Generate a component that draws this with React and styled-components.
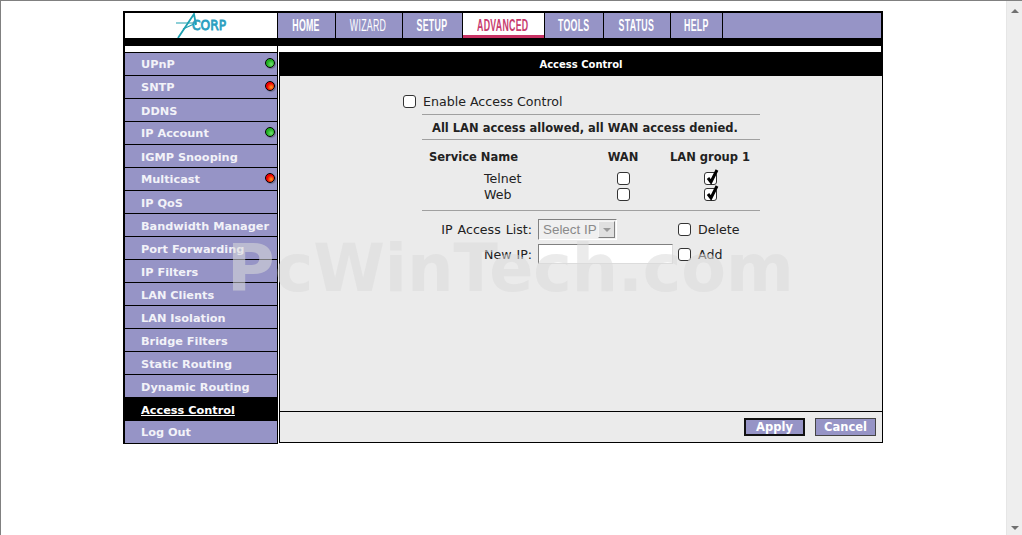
import styled, { createGlobalStyle } from "styled-components"

const NAV = [
    { label: "HOME", width: 57 },
    { label: "WIZARD", width: 66, thin: true },
    { label: "SETUP", width: 59 },
    { label: "ADVANCED", width: 81, active: true },
    { label: "TOOLS", width: 58 },
    { label: "STATUS", width: 66 },
    { label: "HELP", width: 51 },
]

const MENU = [
    { label: "UPnP", dot: "green", raised: true },
    { label: "SNTP", dot: "red", raised: true },
    { label: "DDNS" },
    { label: "IP Account", dot: "green", raised: true },
    { label: "IGMP Snooping" },
    { label: "Multicast", dot: "red", raised: true },
    { label: "IP QoS" },
    { label: "Bandwidth Manager" },
    { label: "Port Forwarding" },
    { label: "IP Filters" },
    { label: "LAN Clients" },
    { label: "LAN Isolation" },
    { label: "Bridge Filters" },
    { label: "Static Routing" },
    { label: "Dynamic Routing" },
    { label: "Access Control", active: true },
    { label: "Log Out", raised: true },
]

function Check({ checked }) {
    return (
        <CheckBox>
            {checked && (
                <CheckMark viewBox="0 0 14 16">
                    <path d="M3 9 L6 13 L12 1" fill="none" stroke="#000" strokeWidth="3" />
                </CheckMark>
            )}
        </CheckBox>
    )
}

export default function App() {
    return (
        <Page>
            <GlobalStyle />
            <Content>
                <Frame>
                    <TopBar>
                        <LogoCell>
                            <svg width="70" height="25" viewBox="0 0 70 25">
                                <path d="M12 25 L28 1 L30 12" fill="none" stroke="#1d9fb0" strokeWidth="1.8" />
                                <path d="M10 10 L31 10 M17 16 L28 11" fill="none" stroke="#1d9fb0" strokeWidth="1.2" />
                                <LogoText x="26" y="17" textLength="34" lengthAdjust="spacingAndGlyphs">CORP</LogoText>
                            </svg>
                        </LogoCell>
                        {NAV.map((item) => (
                            <NavItem key={item.label} $width={item.width} $active={item.active}>
                                <NavLabel $thin={item.thin}>{item.label}</NavLabel>
                            </NavItem>
                        ))}
                        <NavFiller />
                    </TopBar>
                    <Columns>
                        <Sidebar>
                            <SideStrip />
                            {MENU.map((item) => (
                                <MenuRow key={item.label} $active={item.active}>
                                    <MenuLabel $active={item.active} $raised={item.raised}>{item.label}</MenuLabel>
                                    {item.dot && <StatusDot $color={item.dot} />}
                                </MenuRow>
                            ))}
                        </Sidebar>
                        <MainColumn>
                            <MainStrip />
                            <Panel>
                                <PanelTitle>Access Control</PanelTitle>
                                <FormArea>
                                    <EnableRow>
                                        <Check />
                                        <span>Enable Access Control</span>
                                    </EnableRow>
                                    <FormBlock>
                                        <Notice>All LAN access allowed, all WAN access denied.</Notice>
                                        <ServiceGrid>
                                            <HeadCell $first>Service Name</HeadCell>
                                            <HeadCell>WAN</HeadCell>
                                            <HeadCell>LAN group 1</HeadCell>
                                            <ServiceName>Telnet</ServiceName>
                                            <CheckCell><Check /></CheckCell>
                                            <CheckCell><Check checked /></CheckCell>
                                            <ServiceName>Web</ServiceName>
                                            <CheckCell><Check /></CheckCell>
                                            <CheckCell><Check checked /></CheckCell>
                                        </ServiceGrid>
                                        <IpGrid>
                                            <IpLabel>IP Access List:</IpLabel>
                                            <FakeSelect>
                                                Select IP
                                                <SelectArrow />
                                            </FakeSelect>
                                            <OptionLabel>
                                                <Check />
                                                <span>Delete</span>
                                            </OptionLabel>
                                            <IpLabel>New IP:</IpLabel>
                                            <IpInput />
                                            <OptionLabel>
                                                <Check />
                                                <span>Add</span>
                                            </OptionLabel>
                                        </IpGrid>
                                    </FormBlock>
                                </FormArea>
                                <PanelFooter>
                                    <FooterButton $primary>Apply</FooterButton>
                                    <FooterButton>Cancel</FooterButton>
                                </PanelFooter>
                            </Panel>
                        </MainColumn>
                    </Columns>
                    <Watermark>PcWinTech.com</Watermark>
                </Frame>
            </Content>
            <ScrollBar>
                <ScrollArrow $up />
                <ScrollArrow />
            </ScrollBar>
        </Page>
    )
}

const GlobalStyle = createGlobalStyle`
    html, body {
        margin: 0;
        padding: 0;
        background: #ffffff;
        overflow: hidden;
    }
    * {
        box-sizing: border-box;
    }
`

const Page = styled.div`
    display: flex;
    width: 1022px;
    height: 535px;
    border-top: 1px solid #808080;
    font-family: "DejaVu Sans", Verdana, sans-serif;
    background: #ffffff;
`

const Content = styled.div`
    flex: 1;
    border-left: 1px solid #808080;
    padding: 10px 0 0 122px;
`

const Frame = styled.div`
    position: relative;
    width: 760px;
`

const TopBar = styled.div`
    display: flex;
    gap: 1px;
    height: 35px;
    padding: 2px 2px 8px;
    background: #000000;
`

const LogoCell = styled.div`
    display: flex;
    justify-content: center;
    width: 152px;
    background: #ffffff;
`

const LogoText = styled.text`
    font-family: "DejaVu Sans", sans-serif;
    font-size: 13.5px;
    font-weight: 400;
    fill: #2a9fc0;
    stroke: #2a9fc0;
    stroke-width: 0.8px;
`

const NavItem = styled.div`
    display: flex;
    align-items: center;
    justify-content: center;
    width: ${(p) => p.$width}px;
    background: ${(p) => (p.$active ? "#ffffff" : "#9694c6")};
    border-bottom: ${(p) => (p.$active ? "3px solid #c83264" : "none")};
    padding-top: ${(p) => (p.$active ? "3px" : "0")};
    color: ${(p) => (p.$active ? "#c83c6e" : "#ffffff")};
`

const NavLabel = styled.span`
    display: inline-block;
    margin-left: -1px;
    font-family: "Liberation Sans", Arial, sans-serif;
    font-size: 16px;
    font-weight: ${(p) => (p.$thin ? 400 : 700)};
    letter-spacing: 0.5px;
    transform: scaleX(0.55);
`

const NavFiller = styled.div`
    flex: 1;
    background: #9694c6;
`

const Columns = styled.div`
    display: flex;
`

const Sidebar = styled.div`
    width: 155px;
    background: #000000;
    padding: 0 1px 1px 2px;
`

const SideStrip = styled.div`
    height: 6px;
    background: #ffffff;
`

const MenuRow = styled.div`
    display: flex;
    align-items: center;
    justify-content: space-between;
    height: 23px;
    padding: 0 2px 0 16px;
    border-top: 1px solid #000000;
    background: ${(p) => (p.$active ? "#000000" : "#9694c6")};
`

const MenuLabel = styled.span`
    padding-top: ${(p) => (p.$raised ? "0" : "2px")};
    font-size: 11.3px;
    font-weight: 700;
    color: ${(p) => (p.$active ? "#ffffff" : "#f2f2f8")};
    text-decoration: ${(p) => (p.$active ? "underline" : "none")};
    white-space: nowrap;
`

const StatusDot = styled.span`
    width: 10px;
    height: 10px;
    margin-bottom: 3px;
    border-radius: 50%;
    border: 1px solid #000000;
    background: ${(p) =>
        p.$color === "green"
            ? "radial-gradient(circle at 65% 65%, #70e070, #20b020 55%)"
            : "radial-gradient(circle at 65% 65%, #ffa020, #f00000 55%)"};
    box-shadow: 1px 1px 1px #6f6f8f;
`

const MainColumn = styled.div`
    flex: 1;
`

const MainStrip = styled.div`
    height: 6px;
    background: #ffffff;
    border-right: 2px solid #000000;
`

const Panel = styled.div`
    margin-left: 1px;
    height: 391px;
    display: flex;
    flex-direction: column;
    border: 1px solid #000000;
    border-top: none;
    background: #ebebeb;
`

const PanelTitle = styled.div`
    display: flex;
    align-items: center;
    justify-content: center;
    height: 24px;
    flex-shrink: 0;
    background: #000000;
    color: #ffffff;
    font-size: 10px;
    font-weight: 700;
`

const FormArea = styled.div`
    height: 335px;
    flex-shrink: 0;
    padding: 15px 0 0 123px;
    font-size: 12.6px;
    color: #222222;
`

const EnableRow = styled.div`
    display: flex;
    align-items: center;
    gap: 7px;
    height: 20px;
`

const FormBlock = styled.div`
    width: 338px;
    margin: 3px 0 0 19px;
`

const Notice = styled.div`
    height: 26px;
    padding-left: 10px;
    line-height: 26px;
    font-size: 11.5px;
    font-weight: 700;
    white-space: nowrap;
    border-top: 1px solid #a0a0a0;
    border-bottom: 1px solid #a0a0a0;
`

const ServiceGrid = styled.div`
    display: grid;
    grid-template-columns: 171px 60px 114px;
    grid-template-rows: 26px 16px 16px;
    align-items: center;
    height: 71px;
    padding-top: 4px;
    border-bottom: 1px solid #a0a0a0;
`

const HeadCell = styled.div`
    display: flex;
    align-items: center;
    justify-content: ${(p) => (p.$first ? "flex-start" : "center")};
    padding-left: ${(p) => (p.$first ? "7px" : "0")};
    font-size: 11.5px;
    font-weight: 700;
    white-space: nowrap;
`

const ServiceName = styled.div`
    padding-left: 62px;
`

const CheckCell = styled.div`
    display: flex;
    justify-content: center;
`

const CheckBox = styled.span`
    position: relative;
    display: inline-block;
    flex-shrink: 0;
    width: 13px;
    height: 13px;
    border: 1px solid #333333;
    border-radius: 3px;
    background: #ffffff;
`

const CheckMark = styled.svg`
    position: absolute;
    left: 0;
    top: -4px;
    width: 14px;
    height: 16px;
`

const IpGrid = styled.div`
    display: grid;
    grid-template-columns: 110px 135px auto;
    column-gap: 6px;
    row-gap: 4px;
    align-items: center;
    padding-top: 8px;
`

const IpLabel = styled.div`
    text-align: right;
    word-spacing: 1px;
    white-space: nowrap;
`

const FakeSelect = styled.div`
    display: flex;
    align-items: center;
    justify-content: space-between;
    width: 79px;
    height: 21px;
    padding: 0 1px 0 4px;
    border: 1px solid;
    border-color: #808080 #ffffff #ffffff #808080;
    background: #f0f0f0;
    font-family: "Liberation Sans", Arial, sans-serif;
    font-size: 13.4px;
    color: #8a8a8a;
    white-space: nowrap;
`

const SelectArrow = styled.span`
    position: relative;
    flex-shrink: 0;
    width: 17px;
    height: 17px;
    border: 1px solid;
    border-color: #f4f4f4 #808080 #808080 #f4f4f4;
    background: #e0e0e0;
    &::after {
        content: "";
        position: absolute;
        left: 4px;
        top: 6px;
        border: 4px solid transparent;
        border-top: 4px solid #9a9a9a;
    }
`

const IpInput = styled.input`
    width: 135px;
    height: 20px;
    border: 1px solid;
    border-color: #808080 #dcdcdc #dcdcdc #808080;
    background: #ffffff;
    outline: none;
`

const OptionLabel = styled.div`
    display: flex;
    align-items: center;
    gap: 7px;
    margin-left: -1px;
`

const PanelFooter = styled.div`
    flex: 1;
    display: flex;
    align-items: flex-start;
    justify-content: flex-end;
    gap: 10px;
    padding: 6px 6px 0 0;
    border-top: 1px solid #000000;
`

const FooterButton = styled.button`
    width: 61px;
    height: 18px;
    padding: 0;
    border: ${(p) => (p.$primary ? "2px solid #111111" : "1px solid #444444")};
    background: #9694c6;
    color: #ffffff;
    font-family: "DejaVu Sans", Verdana, sans-serif;
    font-size: 11.5px;
    font-weight: 700;
`

const Watermark = styled.div`
    position: absolute;
    left: 104px;
    top: 220px;
    font-size: 65px;
    line-height: 76px;
    font-weight: 700;
    white-space: nowrap;
    color: rgba(218, 218, 218, 0.55);
    pointer-events: none;
`

const ScrollBar = styled.div`
    display: flex;
    flex-direction: column;
    justify-content: space-between;
    align-items: center;
    width: 16px;
    padding: 8px 0 5px;
    background: #eeeeee;
    border-left: 1px solid #e6e6e6;
`

const ScrollArrow = styled.span`
    width: 0;
    height: 0;
    border-left: 4px solid transparent;
    border-right: 4px solid transparent;
    border-top: ${(p) => (p.$up ? "none" : "4px solid #707070")};
    border-bottom: ${(p) => (p.$up ? "4px solid #707070" : "none")};
`
